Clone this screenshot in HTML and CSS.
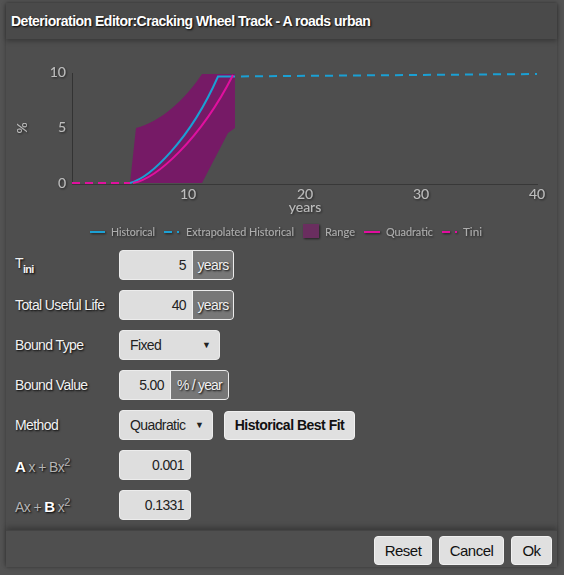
FILE: index.html
```html
<!DOCTYPE html>
<html>
<head>
<meta charset="utf-8">
<link rel="stylesheet" href="styles.css">
</head>
<body>
<div class="dialog">
  <div class="titlebar">Deterioration Editor:Cracking Wheel Track - A roads urban</div>
  <div class="chart">
    <svg width="551" height="211" viewBox="6 39 551 211" xmlns="http://www.w3.org/2000/svg">
      <defs>
        <filter id="sh" x="-10%" y="-30%" width="120%" height="160%">
          <feDropShadow dx="1" dy="1" stdDeviation="0.8" flood-color="#000" flood-opacity="0.6"/>
        </filter>
      </defs>
      <g class="axis-text" filter="url(#sh)">
        <text x="66" y="77" text-anchor="end">10</text>
        <text x="66" y="132" text-anchor="end">5</text>
        <text x="66" y="188" text-anchor="end">0</text>
        <text x="188" y="199" text-anchor="middle">10</text>
        <text x="305" y="199" text-anchor="middle">20</text>
        <text x="421" y="199" text-anchor="middle">30</text>
        <text x="537" y="199" text-anchor="middle">40</text>
        <text x="305" y="212" text-anchor="middle">years</text>
        <text x="0" y="0" text-anchor="middle" transform="translate(27 128) rotate(-90)">%</text>
      </g>
      <line x1="72.5" y1="73" x2="72.5" y2="184" stroke="#333" stroke-width="1"/>
      <line x1="72" y1="184.5" x2="538" y2="184.5" stroke="#383838" stroke-width="1"/>
      <path d="M130 183 L136 128 C160 122 185 100 202 74 L235 74 L235 128 L228 133 L202 183 Z" fill="#761a66"/>
      <path d="M72 183 L130 183" stroke="#e0109e" stroke-width="2" stroke-dasharray="8 5" fill="none"/>
      <path d="M227 76.5 L537 74" stroke="#1aa0d4" stroke-width="2" stroke-dasharray="8 6" fill="none"/>
      <path d="M130 183 C150 178 190 140 218 76.5 L227 76.5" stroke="#1aa0d4" stroke-width="2" fill="none"/>
      <path d="M133 183 C156 179 200 140 233 75" stroke="#e0109e" stroke-width="2" fill="none"/>
      <g class="legend" filter="url(#sh)">
        <line x1="90" y1="232" x2="105" y2="232" stroke="#1aa0d4" stroke-width="2"/>
        <text x="111" y="236" textLength="44" lengthAdjust="spacingAndGlyphs">Historical</text>
        <line x1="164" y1="232" x2="172" y2="232" stroke="#1aa0d4" stroke-width="2"/>
        <line x1="177" y1="232" x2="179" y2="232" stroke="#1aa0d4" stroke-width="2"/>
        <text x="186" y="236" textLength="108" lengthAdjust="spacingAndGlyphs">Extrapolated Historical</text>
        <rect x="303" y="224" width="16" height="14" fill="#6a2f5e"/>
        <text x="325" y="236" textLength="30" lengthAdjust="spacingAndGlyphs">Range</text>
        <line x1="364" y1="232" x2="380" y2="232" stroke="#e0109e" stroke-width="2"/>
        <text x="386" y="236" textLength="47" lengthAdjust="spacingAndGlyphs">Quadratic</text>
        <line x1="442" y1="232" x2="450" y2="232" stroke="#e0109e" stroke-width="2"/>
        <line x1="455" y1="232" x2="457" y2="232" stroke="#e0109e" stroke-width="2"/>
        <text x="463" y="236" textLength="19" lengthAdjust="spacingAndGlyphs">Tini</text>
      </g>
    </svg>
  </div>
  <div class="form">
    <div class="row">
      <div class="label">T<sub>ini</sub></div>
      <div class="group w-years"><span class="val">5</span><span class="addon">years</span></div>
    </div>
    <div class="row">
      <div class="label">Total Useful Life</div>
      <div class="group w-years"><span class="val">40</span><span class="addon">years</span></div>
    </div>
    <div class="row">
      <div class="label">Bound Type</div>
      <div class="select w-fixed"><span>Fixed</span><span class="arrow">▼</span></div>
    </div>
    <div class="row">
      <div class="label">Bound Value</div>
      <div class="group w-bound"><span class="val">5.00</span><span class="addon">% / year</span></div>
    </div>
    <div class="row">
      <div class="label">Method</div>
      <div class="select w-method"><span>Quadratic</span><span class="arrow">▼</span></div>
      <button class="btn bold">Historical Best Fit</button>
    </div>
    <div class="row">
      <div class="label"><b>A</b><span class="dim"> x + Bx<sup>2</sup></span></div>
      <div class="box"><span class="val">0.001</span></div>
    </div>
    <div class="row">
      <div class="label"><span class="dim">Ax + </span><b>B</b><span class="dim"> x<sup>2</sup></span></div>
      <div class="box"><span class="val">0.1331</span></div>
    </div>
  </div>
  <div class="footer">
    <button class="btn f-reset">Reset</button>
    <button class="btn f-cancel">Cancel</button>
    <button class="btn f-ok">Ok</button>
  </div>
</div>
</body>
</html>
```
FILE: styles.css
```css
html, body {
  margin: 0;
  padding: 0;
}
body {
  background: #535353;
  width: 564px;
  height: 575px;
  overflow: hidden;
  font-family: "Liberation Sans", Arial, sans-serif;
}
.dialog {
  margin: 3px 7px 0 6px;
  height: 564px;
  background: #4e4e4e;
  display: flex;
  flex-direction: column;
  box-shadow: 0 0 4px rgba(0,0,0,0.35);
}
.titlebar {
  height: 36px;
  line-height: 36px;
  padding-left: 5px;
  background: #4a4a4a;
  color: #fff;
  font-weight: bold;
  font-size: 14px;
  letter-spacing: -0.5px;
  text-shadow: 1px 1px 2px #000;
  box-shadow: 0 2px 5px rgba(0,0,0,0.3);
}
.chart {
  height: 211px;
}
.chart svg {
  display: block;
}
.axis-text text {
  font-family: Lato, "Open Sans", sans-serif;
  font-size: 14px;
  fill: #bdbdbd;
}
.legend text {
  font-family: Lato, "Open Sans", sans-serif;
  font-size: 12px;
  fill: #adadad;
}
.form {
  display: flex;
  flex-direction: column;
  gap: 10px;
  padding-left: 9px;
  flex: 1;
}
.row {
  display: flex;
  align-items: center;
  height: 30px;
}
.label {
  width: 104px;
  color: #f2f2f2;
  font-size: 14px;
  letter-spacing: -0.6px;
  text-shadow: 1px 1px 2px #000;
}
.label sub {
  font-size: 11px;
  font-weight: bold;
  vertical-align: -5px;
  letter-spacing: -0.8px;
}
.label sup {
  font-size: 11px;
  vertical-align: 6px;
}
.label b {
  font-size: 15px;
  color: #fff;
}
.label .dim {
  color: #b5b5b5;
}
.group, .box, .select {
  box-sizing: border-box;
  height: 30px;
  border: 1px solid #ececec;
  border-radius: 4px;
  background: #dedede;
  display: flex;
  overflow: hidden;
  font-size: 14px;
  letter-spacing: -0.6px;
}
.val {
  flex: 1;
  text-align: right;
  color: #222;
  line-height: 28px;
  padding-right: 6px;
}
.addon {
  flex: 1;
  background: #777;
  color: #f0f0f0;
  line-height: 28px;
  padding: 0 3px;
  text-align: center;
  white-space: nowrap;
  text-shadow: 1px 1px 2px #000;
  border-left: 1px solid #f0f0f0;
}
.w-years { width: 115px; }
.w-years .val { width: 66px; flex: none; }
.w-bound { width: 110px; }
.w-bound .val { width: 44px; flex: none; }
.w-bound .addon { letter-spacing: -0.8px; }
.box { width: 72px; }
.select {
  align-items: center;
  justify-content: space-between;
  color: #222;
  padding: 0 8px 0 10px;
}
.w-fixed { width: 101px; }
.w-method { width: 94px; }
.arrow {
  font-size: 9px;
  letter-spacing: 0;
}
.btn {
  box-sizing: border-box;
  height: 29px;
  border: 1px solid #f0f0f0;
  border-radius: 4px;
  background: #e0e0e0;
  color: #111;
  font-family: "Liberation Sans", Arial, sans-serif;
  font-size: 14px;
  letter-spacing: -0.5px;
  padding: 0;
  margin: 0;
}
.btn.bold {
  font-weight: bold;
  width: 131px;
  margin-left: 11px;
}
.footer {
  height: 37px;
  background: #4f4f4f;
  display: flex;
  justify-content: flex-end;
  align-items: flex-start;
  gap: 7px;
  padding: 5px 5px 0 0;
  box-sizing: border-box;
  box-shadow: 0 -3px 5px rgba(0,0,0,0.25);
  border-top: 1px solid #444;
}
.f-reset { width: 58px; font-size: 15px; }
.f-cancel { width: 65px; font-size: 15px; }
.f-ok { width: 41px; font-size: 15px; }
```
